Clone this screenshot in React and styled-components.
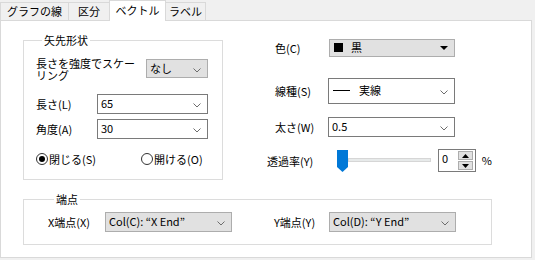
import React from 'react'
import styled, { createGlobalStyle } from 'styled-components'

const GlobalStyle = createGlobalStyle`
  body {
    margin: 0;
    background: #f0f0f0;
    font-family: "Noto Sans CJK JP", "Noto Sans", sans-serif;
    font-size: 11px;
    color: #000;
  }
`

const Window = styled.div`
  width: 535px;
  height: 260px;
  box-sizing: border-box;
  padding: 0 3px 2px 0;
  display: flex;
  flex-direction: column;
`

const TabBar = styled.div`
  display: flex;
  align-items: flex-end;
  height: 20px;
  position: relative;
  z-index: 1;
`

const Tab = styled.div`
  box-sizing: border-box;
  width: ${p => p.w}px;
  height: ${p => (p.active ? 21 : 18)}px;
  margin-bottom: ${p => (p.active ? -1 : 0)}px;
  margin-left: ${p => (p.first ? 0 : -1)}px;
  border: 1px solid #d9d9d9;
  border-bottom: none;
  background: ${p => (p.active ? '#fff' : '#f0f0f0')};
  display: flex;
  justify-content: center;
  padding-top: ${p => (p.active ? 1 : 0)}px;
  line-height: 16px;
`

const Panel = styled.div`
  flex: 1;
  background: #fff;
  border: 1px solid #d9d9d9;
  padding: 12px 0 0 22px;
`

const Top = styled.div`
  display: flex;
`

const Group = styled.fieldset`
  margin: ${p => p.mt || 0}px 0 0 0;
  box-sizing: border-box;
  width: ${p => p.w}px;
  border: 1px solid #dcdcdc;
  padding: ${p => p.pad};
  min-width: 0;
`

const Legend = styled.legend`
  padding: 0 2px;
  margin-left: 6px;
  line-height: 14px;
`

const Column = styled.div`
  display: flex;
  flex-direction: column;
`

const Row = styled.div`
  display: flex;
  align-items: ${p => p.align || 'center'};
  margin-top: ${p => p.mt || 0}px;
`

const Label = styled.div`
  box-sizing: border-box;
  width: ${p => p.w}px;
  padding-left: ${p => p.indent || 0}px;
  line-height: 12px;
  flex-shrink: 0;
`

const Select = styled.div`
  box-sizing: border-box;
  width: ${p => p.w}px;
  height: ${p => p.h || 20}px;
  border: 1px solid ${p => (p.grey ? '#adadad' : '#7a7a7a')};
  background: ${p => (p.grey ? '#e1e1e1' : '#fff')};
  display: flex;
  align-items: center;
  padding: 0 6px 0 3px;
  margin-top: ${p => p.mt || 0}px;
`

const Value = styled.div`
  flex: 1;
  display: flex;
  align-items: center;
  gap: ${p => p.gap || 0}px;
  white-space: nowrap;
  line-height: 14px;
  padding-bottom: 2px;
`

const Swatch = styled.span`
  width: 9px;
  height: 9px;
  background: #000;
  margin-left: 1px;
`

const LineSample = styled.span`
  width: 17px;
  height: 1px;
  background: #000;
  margin: 0 9px 0 1px;
`

const Right = styled.div`
  display: flex;
  flex-direction: column;
  margin-left: 44px;
  width: 225px;
  padding-top: 6px;
`

const Radios = styled.div`
  display: flex;
  margin-top: 13px;
`

const Radio = styled.div`
  display: flex;
  align-items: center;
  width: ${p => p.w}px;
  line-height: 14px;
`

const Circle = styled.span`
  box-sizing: border-box;
  width: 12px;
  height: 12px;
  border: 1px solid #333;
  border-radius: 50%;
  margin-right: 1px;
  display: flex;
  align-items: center;
  justify-content: center;
  &::after {
    content: '';
    width: 6px;
    height: 6px;
    border-radius: 50%;
    background: ${p => (p.on ? '#000' : 'transparent')};
  }
`

const Slider = styled.div`
  width: 94px;
  height: 22px;
  display: flex;
  align-items: flex-start;
  margin-left: 8px;
`

const Track = styled.div`
  width: 83px;
  height: 4px;
  margin-top: 8px;
  background: #e7eaea;
  border: 1px solid #d6d6d6;
  box-sizing: border-box;
`

const Spin = styled.div`
  box-sizing: border-box;
  width: 55px;
  height: 23px;
  border: 1px solid #7a7a7a;
  display: flex;
  margin-left: 7px;
`

const SpinText = styled.div`
  flex: 1;
  padding: 1px 0 0 3px;
  line-height: 14px;
`

const SpinButtons = styled.div`
  display: flex;
  flex-direction: column;
  gap: 1px;
  padding: 1px 2px 1px 0;
`

const SpinButton = styled.div`
  box-sizing: border-box;
  width: 15px;
  flex: 1;
  background: #e1e1e1;
  border: 1px solid #adadad;
  display: flex;
  align-items: center;
  justify-content: center;
`

const Percent = styled.div`
  margin-left: 6px;
  margin-top: -2px;
`

const Endpoints = styled.div`
  display: flex;
  align-items: center;
`

const Chevron = () => (
  <svg width="8" height="5" viewBox="0 0 8 5" style={{ marginTop: 3 }}>
    <polyline points="0.5,0.5 4,4 7.5,0.5" fill="none" stroke="#6d6d6d" strokeWidth="1" />
  </svg>
)

const Triangle = ({ up, w = 8, h = 4 }) => (
  <svg width={w} height={h} viewBox={`0 0 ${w} ${h}`}>
    <polygon points={up ? `0,${h} ${w},${h} ${w / 2},0` : `0,0 ${w},0 ${w / 2},${h}`} fill="#000" />
  </svg>
)

const Thumb = () => (
  <svg width="11" height="22" viewBox="0 0 11 22">
    <polygon points="0,0 11,0 11,17 5.5,22 0,17" fill="#0078d7" />
  </svg>
)

const tabs = [
  { name: 'グラフの線', w: 69 },
  { name: '区分', w: 42 },
  { name: 'ベクトル', w: 57, active: true },
  { name: 'ラベル', w: 41 },
]

export default function App() {
  return (
    <Window>
      <GlobalStyle />
      <TabBar>
        {tabs.map((t, i) => (
          <Tab key={t.name} w={t.w} active={t.active} first={i === 0}>{t.name}</Tab>
        ))}
      </TabBar>
      <Panel>
        <Top>
          <Group w={200} pad="10px 14px 13px 12px">
            <Legend>矢先形状</Legend>
            <Column>
              <Row align="flex-start">
                <Label w={110} style={{ paddingRight: 6 }}>長さを強度でスケーリング</Label>
                <Select grey w={62} h={19} mt={2}>
                  <Value>なし</Value>
                  <Chevron />
                </Select>
              </Row>
              <Row mt={13}>
                <Label w={61}>長さ(L)</Label>
                <Select w={111}>
                  <Value>65</Value>
                  <Chevron />
                </Select>
              </Row>
              <Row mt={5}>
                <Label w={61}>角度(A)</Label>
                <Select w={111}>
                  <Value>30</Value>
                  <Chevron />
                </Select>
              </Row>
              <Radios>
                <Radio w={105}><Circle on />閉じる(S)</Radio>
                <Radio><Circle />開ける(O)</Radio>
              </Radios>
            </Column>
          </Group>
          <Right>
            <Row>
              <Label w={62} indent={8}>色(C)</Label>
              <Select grey w={126} h={18}>
                <Value gap={8}><Swatch />黒</Value>
                <Triangle />
              </Select>
            </Row>
            <Row mt={21}>
              <Label w={61} indent={8}>線種(S)</Label>
              <Select w={127} h={26}>
                <Value><LineSample />実線</Value>
                <Chevron />
              </Select>
            </Row>
            <Row mt={13}>
              <Label w={61} indent={8}>太さ(W)</Label>
              <Select w={127} h={20}>
                <Value>0.5</Value>
                <Chevron />
              </Select>
            </Row>
            <Row mt={12}>
              <Label w={62}>透過率(Y)</Label>
              <Slider>
                <Thumb />
                <Track />
              </Slider>
              <Spin>
                <SpinText>0</SpinText>
                <SpinButtons>
                  <SpinButton><Triangle up w={7} h={4} /></SpinButton>
                  <SpinButton><Triangle w={7} h={4} /></SpinButton>
                </SpinButtons>
              </Spin>
              <Percent>%</Percent>
            </Row>
          </Right>
        </Top>
        <Group w={469} pad="6px 0 12px 24px" mt={12}>
          <Legend>端点</Legend>
          <Endpoints>
            <Label w={57}>X端点(X)</Label>
            <Select grey w={127}>
              <Value>Col(C): “X End”</Value>
              <Chevron />
            </Select>
            <Label w={97} indent={42}>Y端点(Y)</Label>
            <Select grey w={127}>
              <Value>Col(D): “Y End”</Value>
              <Chevron />
            </Select>
          </Endpoints>
        </Group>
      </Panel>
    </Window>
  )
}
